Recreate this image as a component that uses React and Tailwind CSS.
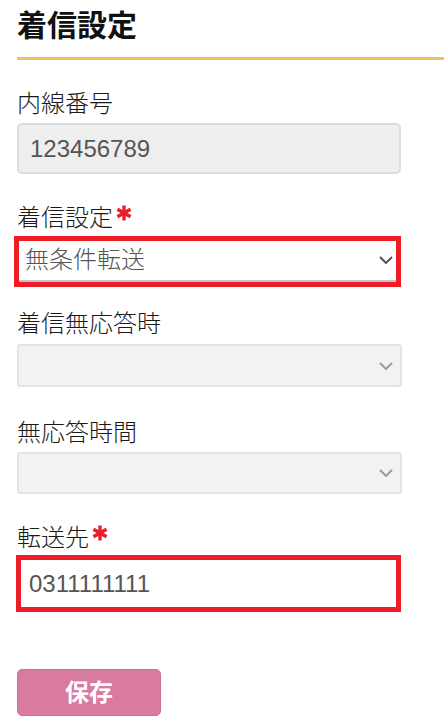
import React from "react";

const font = { fontFamily: '"Liberation Sans", "Noto Sans CJK JP", sans-serif' };

function Chevron({ color }) {
  return (
    <svg width="14" height="8" viewBox="0 0 14 8" className="shrink-0">
      <path d="M1 1 L7 7 L13 1" fill="none" stroke={color} strokeWidth="2" />
    </svg>
  );
}

function Star() {
  return (
    <svg width="16" height="16" viewBox="0 0 16 16" className="ml-[3px] mt-[-10px]">
      <g stroke="#ee1c25" strokeWidth="3.4" strokeLinecap="butt">
        <line x1="8" y1="0.5" x2="8" y2="15.5" />
        <line x1="1.5" y1="4.2" x2="14.5" y2="11.8" />
        <line x1="1.5" y1="11.8" x2="14.5" y2="4.2" />
      </g>
    </svg>
  );
}

function Label({ children, req, className = "" }) {
  return (
    <div className={"flex items-center text-[24px] leading-[32px] font-light text-[#1a1a1a] " + className}>
      <span>{children}</span>
      {req && <Star />}
    </div>
  );
}

export default function App() {
  return (
    <div className="bg-white min-h-[728px] w-[444px] pl-[17px]" style={font}>
      <h1 className="pt-[6px] pb-[11px] text-[30px] leading-[40px] font-bold text-[#111] border-b-[3px] border-[#ebc35f]">
        着信設定
      </h1>

      <div className="w-[384px]">
        <Label className="mt-[28px]">内線番号</Label>
        <div className="mt-[3px] h-[51px] flex items-center rounded-[5px] border-2 border-[#dcdcdc] bg-[#eeeeee] pl-[11px] text-[24px] text-[#555]">
          123456789
        </div>

        <Label req className="mt-[28px]">着信設定</Label>
        <div className="mt-[2px] -ml-[3px] w-[387px] h-[51px] border-[5px] border-[#ee1c25] bg-white">
          <div className="h-full flex items-center justify-between border-b-2 border-[#c4c4c4] pl-[6px] pr-[3px] pb-[2px] text-[24px] font-light text-[#555]">
            <span>無条件転送</span>
            <Chevron color="#555" />
          </div>
        </div>

        <Label className="mt-[21px]">着信無応答時</Label>
        <div className="mt-[4px] w-[385px] h-[43px] flex items-center justify-end rounded-[3px] border-2 border-[#e4e4e4] bg-[#f2f2f2] pr-[7px]">
          <Chevron color="#9a9a9a" />
        </div>

        <Label className="mt-[30px]">無応答時間</Label>
        <div className="mt-[3px] w-[385px] h-[42px] flex items-center justify-end rounded-[3px] border-2 border-[#e4e4e4] bg-[#f2f2f2] pr-[7px]">
          <Chevron color="#9a9a9a" />
        </div>

        <Label req className="mt-[28px]">転送先</Label>
        <div className="mt-[1px] -ml-[1px] w-[385px] h-[57px] flex items-center border-[5px] border-[#ee1c25] bg-white pl-[8px] text-[24px] text-[#555]">
          0311111111
        </div>

        <button className="mt-[57px] w-[144px] h-[47px] rounded-[5px] border border-[#cf6f93] bg-[#d97b9e] text-white text-[24px] font-bold flex items-center justify-center">
          保存
        </button>
      </div>
    </div>
  );
}
